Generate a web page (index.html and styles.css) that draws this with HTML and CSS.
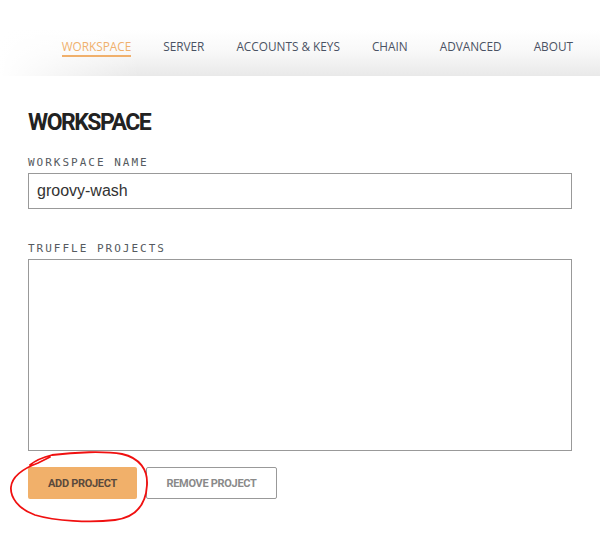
FILE: index.html
```html
<!DOCTYPE html>
<html>
<head>
<meta charset="utf-8">
<link rel="stylesheet" href="styles.css">
</head>
<body>
<header class="topbar">
  <nav class="nav">
    <a class="nav-item active">WORKSPACE</a>
    <a class="nav-item">SERVER</a>
    <a class="nav-item">ACCOUNTS &amp; KEYS</a>
    <a class="nav-item">CHAIN</a>
    <a class="nav-item">ADVANCED</a>
    <a class="nav-item">ABOUT</a>
  </nav>
</header>
<main class="content">
  <h1 class="title">WORKSPACE</h1>
  <label class="field-label">WORKSPACE NAME</label>
  <div class="text-input">groovy-wash</div>
  <label class="field-label projects-label">TRUFFLE PROJECTS</label>
  <div class="project-list"></div>
  <div class="actions">
    <button class="btn btn-primary">ADD PROJECT</button>
    <button class="btn btn-secondary">REMOVE PROJECT</button>
  </div>
</main>
<svg class="scribble" width="160" height="90" viewBox="0 0 160 90">
  <path d="M30 20 C 36 15, 44 12, 52 10 C 75 7, 105 6, 122 9 C 140 13, 148 25, 147 40 C 146 58, 138 72, 115 75 C 90 78, 55 76, 35 70 C 18 64, 10 52, 11 42 C 12 32, 22 24, 38 18 L 50 12" fill="none" stroke="#f01010" stroke-width="1.8" stroke-linecap="round" stroke-linejoin="round"/>
</svg>
</body>
</html>
```

FILE: styles.css
```css
html, body {
  margin: 0;
  padding: 0;
  background: #ffffff;
}

body {
  position: relative;
  min-height: 552px;
}

.topbar {
  height: 76px;
  background:
    linear-gradient(to right, rgba(255,255,255,1) 0px, rgba(255,255,255,0) 140px),
    linear-gradient(to bottom, #ffffff 0px, #ffffff 30px, #f8f8f8 52px, #e9e9e9 76px);
  display: flex;
  align-items: flex-start;
}

.nav {
  flex: 1;
  display: flex;
  justify-content: flex-end;
  gap: 32px;
  padding: 38px 27px 0 0;
}

.nav-item {
  font-family: "Open Sans", sans-serif;
  font-size: 11.8px;
  line-height: 16px;
  color: #4a5263;
  padding-bottom: 1px;
  border-bottom: 2px solid transparent;
}

.nav-item.active {
  color: #f0b06c;
  border-bottom-color: #f0b06c;
}

.content {
  padding: 0 28px 53px;
}

.title {
  margin: 33px 0 0 0;
  font-family: "Roboto", sans-serif;
  font-weight: 700;
  font-size: 23px;
  line-height: 28px;
  color: #222222;
  letter-spacing: -1.5px;
}

.field-label {
  display: block;
  margin-top: 19px;
  font-family: "DejaVu Sans Mono", monospace;
  font-size: 11px;
  line-height: 14px;
  letter-spacing: 2px;
  color: #555a60;
}

.text-input {
  margin-top: 3px;
  height: 34px;
  border: 1px solid #999999;
  padding: 0 8px;
  font-family: "Liberation Sans", Arial, sans-serif;
  font-size: 16px;
  line-height: 34px;
  color: #333333;
}

.projects-label {
  margin-top: 33px;
}

.project-list {
  margin-top: 3px;
  height: 190px;
  border: 1px solid #999999;
}

.actions {
  display: flex;
  gap: 9px;
  margin-top: 16px;
}

.btn {
  font-family: "Roboto", sans-serif;
  font-weight: 700;
  font-size: 11px;
  letter-spacing: -0.3px;
  height: 32px;
  border-radius: 2px;
  cursor: pointer;
}

.btn-primary {
  width: 109px;
  background: #f1b06a;
  border: none;
  color: #5b4a3c;
}

.btn-secondary {
  width: 131px;
  background: #ffffff;
  border: 1px solid #999999;
  color: #8a8a8a;
}

.scribble {
  position: absolute;
  left: 0;
  top: 445px;
  width: 160px;
  height: 90px;
  pointer-events: none;
}
```
